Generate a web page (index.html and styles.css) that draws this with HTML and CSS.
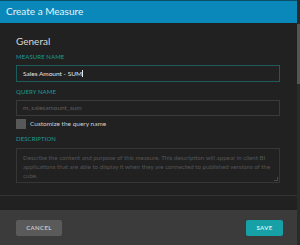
FILE: index.html
```html
<!DOCTYPE html>
<html>
<head>
<meta charset="utf-8">
<link rel="stylesheet" href="styles.css">
</head>
<body>
<div class="frame">
  <div class="dialog">
    <div class="header">Create a Measure</div>
    <div class="content">
      <div class="section">
        <div class="heading">General</div>
        <div class="label label-first">MEASURE NAME</div>
        <div class="input input-active">Sales Amount - SUM<span class="caret"></span></div>
        <div class="label">QUERY NAME</div>
        <div class="input input-disabled">m_salesamount_sum</div>
        <div class="check-row">
          <span class="checkbox"></span>
          <span class="check-text">Customize the query name</span>
        </div>
        <div class="label">DESCRIPTION</div>
        <div class="textarea">Describe the content and purpose of this measure. This description will appear in client BI applications that are able to display it when they are connected to published versions of the cube.<span class="grip"></span></div>
      </div>
      <div class="separator"></div>
      <div class="section">
        <div class="heading heading-source">Source</div>
      </div>
    </div>
    <div class="footer">
      <div class="btn btn-cancel">CANCEL</div>
      <div class="btn btn-save">SAVE</div>
    </div>
  </div>
  <div class="scrollbar"><div class="thumb"></div></div>
</div>
</body>
</html>
```
FILE: styles.css
```css
html, body {
  margin: 0;
  padding: 0;
  background: #212121;
}
body {
  font-family: Lato, "Open Sans", sans-serif;
}
.frame {
  display: flex;
  width: 300px;
  height: 245px;
  overflow: hidden;
}
.dialog {
  width: 297px;
  height: 245px;
  display: flex;
  flex-direction: column;
  background: #212121;
}
.header {
  height: 22px;
  border-top: 1px solid #0d4f68;
  background: #0a88b9;
  color: #e6f4fa;
  font-size: 10px;
  line-height: 21px;
  padding-left: 6px;
  flex: none;
}
.content {
  flex: 1;
  overflow: hidden;
}
.section {
  padding: 12px 17px 0 16px;
}
.heading {
  color: #d8d8d8;
  font-size: 10px;
  line-height: 12px;
}
.heading-source {
  margin-top: -1px;
}
.label {
  color: #1a9a9a;
  font-size: 6px;
  line-height: 8px;
  margin-top: 6px;
  letter-spacing: 0.1px;
}
.label-first {
  margin-top: 6px;
}
.input {
  box-sizing: border-box;
  margin-top: 4px;
  height: 17px;
  border: 1px solid #3a3a3a;
  font-size: 6.5px;
  line-height: 15px;
  padding-left: 6px;
  color: #5e5e5e;
}
.input-active {
  border-color: #1c5c5c;
  color: #e6e6e6;
}
.input-disabled {
  height: 16px;
  line-height: 14px;
}
.caret {
  display: inline-block;
  width: 1px;
  height: 7px;
  background: #e6e6e6;
  vertical-align: -1px;
}
.check-row {
  display: flex;
  align-items: center;
  gap: 4px;
  margin-top: 3px;
  height: 10px;
}
.checkbox {
  width: 10px;
  height: 10px;
  background: #585858;
  flex: none;
}
.check-text {
  color: #cfcfcf;
  font-size: 6.5px;
  line-height: 10px;
}
.textarea {
  position: relative;
  box-sizing: border-box;
  margin-top: 5px;
  height: 35px;
  border: 1px solid #363636;
  padding: 4px 8px 0 6px;
  font-size: 6.2px;
  line-height: 9px;
  color: #555555;
}
.grip {
  position: absolute;
  right: 1px;
  bottom: 1px;
  width: 3px;
  height: 3px;
  border-right: 1px solid #4a4a4a;
  border-bottom: 1px solid #4a4a4a;
}
.separator {
  margin-top: 12px;
  height: 1px;
  background: #333333;
}
.footer {
  flex: none;
  height: 35px;
  box-sizing: border-box;
  background: #3b3b3b;
  display: flex;
  justify-content: space-between;
  align-items: flex-start;
  padding: 10px 14px 0 16px;
}
.btn {
  height: 16px;
  border-radius: 2px;
  font-size: 6px;
  font-weight: 700;
  line-height: 16px;
  text-align: center;
  letter-spacing: 0.4px;
}
.btn-cancel {
  width: 46px;
  background: #5a5a5a;
  color: #c4c4c4;
}
.btn-save {
  width: 37px;
  background: #17a0a6;
  color: #d4eeee;
}
.scrollbar {
  width: 3px;
  height: 245px;
  background: #2a2a2a;
  flex: none;
}
.thumb {
  margin-top: 24px;
  height: 60px;
  background: #555555;
}
```
